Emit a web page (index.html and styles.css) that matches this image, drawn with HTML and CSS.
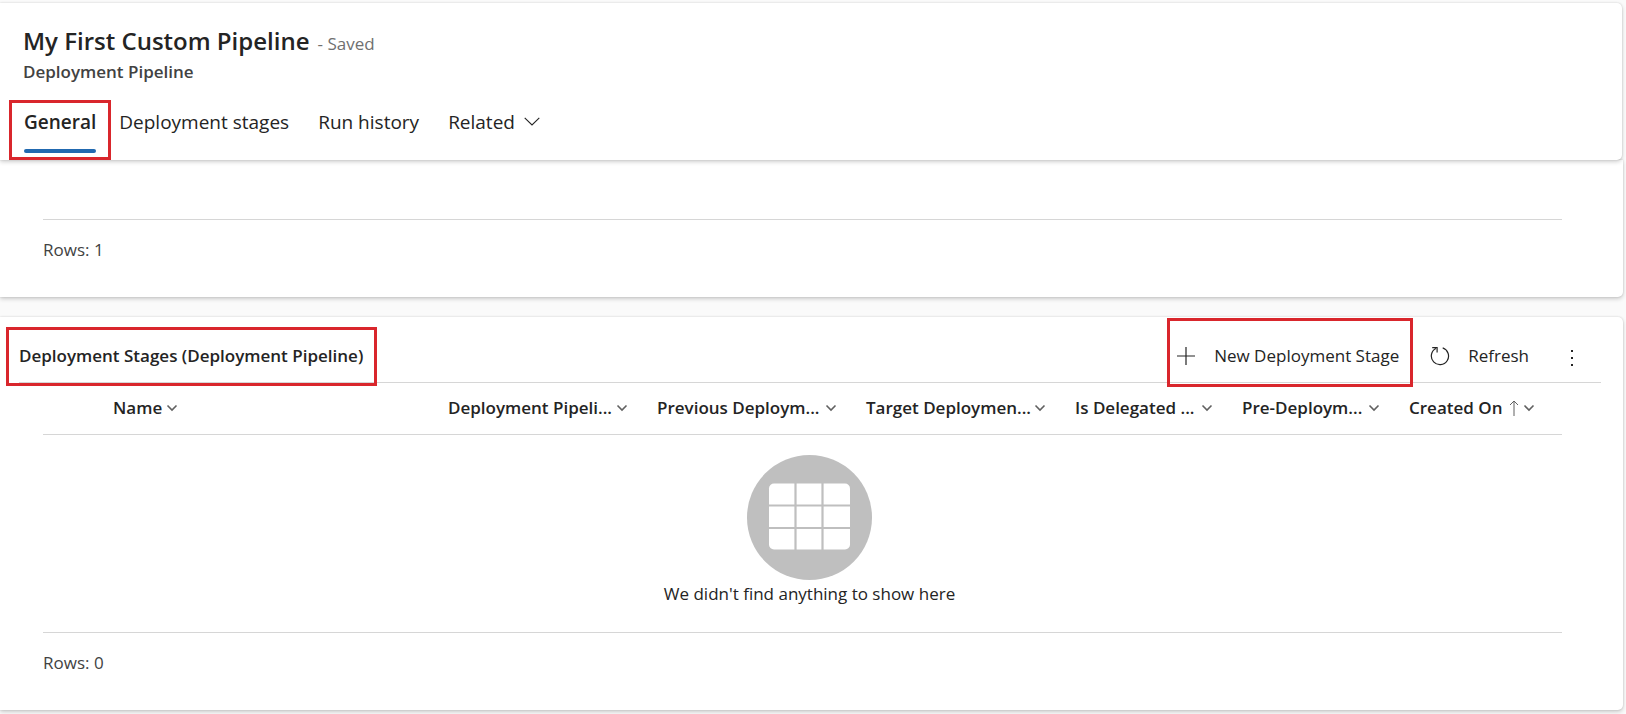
FILE: index.html
```html
<!DOCTYPE html>
<html lang="en">
<head>
<meta charset="utf-8">
<meta name="viewport" content="width=device-width, initial-scale=1">
<title>My First Custom Pipeline</title>
<link rel="stylesheet" href="styles.css">
</head>
<body>
<svg class="defs" aria-hidden="true">
  <symbol id="caret" viewBox="0 0 12 8"><path d="M1.5 1.5 6 6l4.500-4.500" fill="none" stroke="currentColor" stroke-width="1.600"/></symbol>
</svg>
<header class="card header">
  <div class="title-row">
    <h1 class="title">My First Custom Pipeline</h1>
    <span class="status">- Saved</span>
  </div>
  <p class="subtitle">Deployment Pipeline</p>
  <nav class="tabs" role="tablist">
    <button class="tab tab-active marked" role="tab" aria-selected="true">General</button>
    <button class="tab" role="tab">Deployment stages</button>
    <button class="tab" role="tab">Run history</button>
    <button class="tab" role="tab">Related
      <svg class="tab-caret" viewBox="0 0 16 9" aria-hidden="true"><path d="M.7.8 8 8 15.300.8" fill="none" stroke="currentColor" stroke-width="1.100"/></svg>
    </button>
  </nav>
</header>
<main>
  <section class="card summary">
    <p class="rows">Rows: 1</p>
  </section>
  <section class="card stages">
    <div class="toolbar">
      <h2 class="section-title marked">Deployment Stages (Deployment Pipeline)</h2>
      <div class="actions">
        <button class="action action-new marked">
          <svg class="icon" viewBox="0 0 20 20" aria-hidden="true"><path d="M10 1v18M1 10h18" stroke="currentColor" stroke-width="1.200"/></svg>
          New Deployment Stage
        </button>
        <button class="action">
          <svg class="icon" viewBox="0 0 20 20" aria-hidden="true"><path d="M12.700 1.900A8.600 8.600 0 1 1 5.800 2.500M2.200 1.600h4.900v4.900" fill="none" stroke="currentColor" stroke-width="1.200"/></svg>
          Refresh
        </button>
        <button class="action action-more" aria-label="More commands">
          <svg class="icon-more" viewBox="0 0 4 16" aria-hidden="true"><g fill="currentColor"><rect x="1" y="0" width="2" height="2"/><rect x="1" y="7" width="2" height="2"/><rect x="1" y="14" width="2" height="2"/></g></svg>
        </button>
      </div>
    </div>
    <div class="grid">
      <table class="table">
        <colgroup>
          <col class="col-select"><col><col class="col-wide"><col class="col-wide"><col class="col-wide"><col class="col-narrow"><col class="col-narrow"><col class="col-last">
        </colgroup>
        <thead>
          <tr>
            <td></td>
            <th scope="col"><button class="sort sort-tight">Name<svg class="caret" aria-hidden="true"><use href="#caret"/></svg></button></th>
            <th scope="col"><button class="sort">Deployment Pipeli...<svg class="caret" aria-hidden="true"><use href="#caret"/></svg></button></th>
            <th scope="col"><button class="sort">Previous Deploym...<svg class="caret" aria-hidden="true"><use href="#caret"/></svg></button></th>
            <th scope="col"><button class="sort">Target Deploymen...<svg class="caret" aria-hidden="true"><use href="#caret"/></svg></button></th>
            <th scope="col"><button class="sort">Is Delegated ...<svg class="caret" aria-hidden="true"><use href="#caret"/></svg></button></th>
            <th scope="col"><button class="sort">Pre-Deploym...<svg class="caret" aria-hidden="true"><use href="#caret"/></svg></button></th>
            <th scope="col" aria-sort="ascending"><button class="sort sort-tight">Created On<svg class="arrow" viewBox="0 0 10 16" aria-hidden="true"><path d="M5 16V1M1 5l4-4 4 4" fill="none" stroke="currentColor"/></svg><svg class="caret" aria-hidden="true"><use href="#caret"/></svg></button></th>
          </tr>
        </thead>
      </table>
      <div class="empty">
        <svg class="empty-icon" viewBox="0 0 125 125" aria-hidden="true">
          <circle cx="62.500" cy="62.500" r="62.500" fill="#bfbfbf"/>
          <rect x="22" y="28.500" width="81" height="66" rx="5" fill="#fff"/>
          <path d="M48.500 28v67M75.500 28v67M22 50.500h81M22 73h81" stroke="#bfbfbf" stroke-width="2.200"/>
        </svg>
        <p class="empty-text">We didn't find anything to show here</p>
      </div>
    </div>
    <p class="rows">Rows: 0</p>
  </section>
</main>
</body>
</html>
```
FILE: styles.css
```css
* { box-sizing: border-box; }
body {
  margin: 0;
  padding: 3px 3px 4px 0;
  background: #fafafa;
  color: #242424;
  font: 17px/24px "Open Sans", "Noto Sans", sans-serif;
}
h1, h2, p { margin: 0; }
button {
  border: 0;
  padding: 0;
  background: none;
  color: inherit;
  font: inherit;
  white-space: nowrap;
}
.defs { position: absolute; width: 0; height: 0; }
.card {
  background: #fff;
  border-radius: 0 5px 5px 0;
  box-shadow: 0 0 2px rgba(0, 0, 0, .16), 0 2px 4px rgba(0, 0, 0, .18);
}
.header {
  position: relative;
  margin-right: 1px;
  padding: 21px 23px 0;
}
.title-row { display: flex; align-items: baseline; gap: 8px; }
.title { font-size: 24px; line-height: 34px; font-weight: 600; }
.status { color: #707070; }
.subtitle { margin-top: 2px; color: #424242; font-size: 17px; font-weight: 600; }
.tabs { display: flex; gap: 29px; margin: 18px 0 0 1px; }
.tab {
  position: relative;
  height: 58px;
  padding-bottom: 18px;
  font-size: 19px;
}
.tab-active { margin-right: -6px; font-weight: 600; }
.tab-active::after {
  content: "";
  position: absolute;
  inset: auto 0 7px;
  height: 4px;
  border-radius: 2px;
  background: #2169b0;
}
.tab-caret { width: 16px; height: 9px; margin-left: 4px; vertical-align: 3px; }

/* Red callout frames around the highlighted items */
.marked { position: relative; }
.marked::before {
  content: "";
  position: absolute;
  border: 3px solid #d9262c;
  pointer-events: none;
}
.tab.marked::before { inset: -2px -15px 0 -15px; }
.section-title.marked::before { inset: -17px -14px -18px -13px; }
.action-new.marked::before { inset: -26px -14px -19px -9px; }

.summary { padding: 59px 61px 29px 43px; border-top-right-radius: 0; }
.rows { padding-top: 18px; border-top: 1px solid #d6d6d6; color: #424242; }
.summary .rows { min-height: 49px; }

.stages { margin-top: 20px; padding-bottom: 29px; }
.toolbar {
  display: flex;
  justify-content: space-between;
  margin: 0 22px 0 19px;
  padding-top: 27px;
  border-bottom: 1px solid #d6d6d6;
}
.section-title { height: 24px; font-size: 17px; line-height: 24px; font-weight: 600; }
.actions { display: flex; height: 38px; padding-right: 27px; }
.action { display: flex; align-items: center; gap: 18px; height: 24px; }
.action + .action { margin-left: 31px; }
.action.action-more { margin-left: 41px; }
.icon { width: 20px; height: 20px; }
.icon-more { width: 4px; height: 16px; margin-top: 4px; }

.grid { margin: 0 61px 0 43px; }
.table {
  width: 100%;
  table-layout: fixed;
  border-collapse: collapse;
  border-bottom: 1px solid #d6d6d6;
}
.col-select { width: 60px; }
.col-wide { width: 209px; }
.col-narrow { width: 167px; }
.col-last { width: 163px; }
th, .table td { height: 51px; padding: 0 19px 0 10px; text-align: left; }
th:last-child { padding-right: 0; }
.sort {
  display: flex;
  align-items: center;
  justify-content: space-between;
  width: 100%;
  height: 24px;
  font-size: 17px;
  font-weight: 600;
}
.sort-tight { justify-content: flex-start; gap: 4px; }
.caret { flex: none; width: 12px; height: 8px; color: #616161; }
.arrow { flex: none; width: 10px; height: 16px; margin-left: 3px; color: #616161; }
.empty {
  display: flex;
  flex-direction: column;
  align-items: center;
  padding: 20px 0 26px 14px;
}
.empty-icon { width: 125px; height: 125px; }
.empty-text { margin-top: 2px; }
.stages .rows { margin: 0 61px 0 43px; min-height: 49px; }
```
